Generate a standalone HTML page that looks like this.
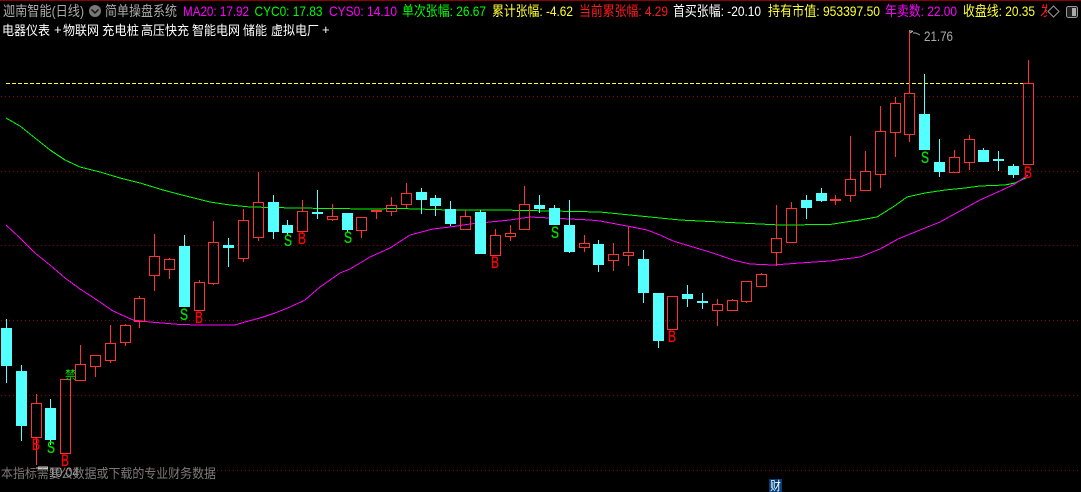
<!DOCTYPE html>
<html><head><meta charset="utf-8"><style>
html,body{margin:0;padding:0;background:#000;width:1081px;height:492px;overflow:hidden}
svg{display:block;position:absolute;left:0;top:0}
text{font-family:"Liberation Sans","Noto Sans CJK SC",sans-serif}
.h text{font-size:14px}
.l text{stroke-width:.35px}
</style></head><body>
<svg width="1081" height="492" viewBox="0 0 1081 492">
<rect width="1081" height="492" fill="#000"/>
<rect x="0" y="0" width="1081" height="1" fill="#8a0000"/>
<g shape-rendering="crispEdges">
<g stroke="#8b0000" stroke-width="1" stroke-dasharray="1 3" fill="none">
<path d="M1 96.5H1081M1 171.5H1081M1 245.5H1081M1 320.5H1081M1 395.5H1081M1 470.5H1081"/>
</g>
<path d="M6 83.5H1023" stroke="#ffff33" stroke-dasharray="4 2" fill="none"/>
<polyline fill="none" stroke="#00ff00" points="6,118 20,126 35,138 50,150 65,160 80,167 100,172 120,178 140,183 163,190 182,195 210,202 230,205 250,207 295,208 330,208.5 370,209 400,208.5 450,210 500,210 550,211 600,212 620,214 640,216 680,220 740,223 780,225 830,224.5 846,222 860,220 877,217 893,207 907,197 925,193 945,190 965,188 980,186 1005,185 1015,183 1028,177"/>
<polyline fill="none" stroke="#ff00ff" points="6,225 20,238 35,253 50,265 65,278 80,289 97,300 113,311 133,320 150,322 180,324.5 200,325 235,325 245,322 260,318 275,313 290,307 305,300 320,287 340,273 350,269 370,257 390,248 410,235 433,229 450,227 470,224 490,222 510,220 530,217 550,218 590,220 600,221 627,226 647,230 660,235 673,241 693,247 713,253 733,260 750,264 773,265 800,263 830,261 860,257 880,249 898,239 920,230 940,222 960,211 980,200 1000,191 1015,184 1028,175"/>
<path fill="#54ffff" stroke="#54ffff" d="M6.5 319V383M1.5 328.5h10v37h-10zM21.5 365V441M16.5 371.5h10v54h-10zM50.5 399V445M45.5 408.5h10v31h-10zM184.5 235V306M179.5 246.5h10v60h-10zM228.5 238V267M223.5 245.5h10v2h-10zM273.5 195V239M268.5 202.5h10v29h-10zM287.5 220V236M282.5 225.5h10v7h-10zM317.5 190V219M312.5 212.5h10v1h-10zM347.5 213V232M342.5 213.5h10v16h-10zM421.5 188V214M416.5 192.5h10v7h-10zM435.5 195V216M430.5 198.5h10v7h-10zM450.5 201V226M445.5 209.5h10v14h-10zM480.5 210V253M475.5 212.5h10v41h-10zM539.5 195V213M534.5 205.5h10v3h-10zM554.5 205V224M549.5 208.5h10v16h-10zM569.5 200V253M564.5 225.5h10v26h-10zM598.5 240V272M593.5 244.5h10v20h-10zM643.5 250V303M638.5 259.5h10v33h-10zM658.5 293V348M653.5 293.5h10v47h-10zM687.5 285V307M682.5 294.5h10v4h-10zM702.5 293V309M697.5 301.5h10v1h-10zM806.5 195V219M801.5 200.5h10v7h-10zM821.5 188V202M816.5 193.5h10v7h-10zM924.5 74V149M919.5 114.5h10v35h-10zM939.5 139V177M934.5 162.5h10v9h-10zM983.5 148V162M978.5 150.5h10v11h-10zM998.5 151V171M993.5 159.5h10v1h-10zM1013.5 164V178M1008.5 166.5h10v8h-10z"/>
<path fill="none" stroke="#ff3232" d="M36.5 394V403M36.5 437V465M31.5 403.5h10v34h-10zM60.5 379.5h10v74h-10zM80.5 345V364M75.5 364.5h10v16h-10zM95.5 366V377M90.5 355.5h10v11h-10zM110.5 325V343M110.5 360V363M105.5 343.5h10v17h-10zM125.5 324V325M125.5 342V346M120.5 325.5h10v17h-10zM139.5 296V298M139.5 321V328M134.5 298.5h10v23h-10zM154.5 234V256M154.5 275V291M149.5 256.5h10v19h-10zM169.5 258V259M169.5 269V279M164.5 259.5h10v10h-10zM199.5 280V282M194.5 282.5h10v28h-10zM213.5 221V242M213.5 283V285M208.5 242.5h10v41h-10zM243.5 209V220M243.5 258V262M238.5 220.5h10v38h-10zM258.5 172V202M258.5 237V241M253.5 202.5h10v35h-10zM302.5 200V211M302.5 231V233M297.5 211.5h10v20h-10zM332.5 204V216M332.5 219V221M327.5 216.5h10v3h-10zM361.5 230V238M356.5 217.5h10v13h-10zM376.5 212V219M391.5 197V205M391.5 211V216M386.5 205.5h10v6h-10zM406.5 183V193M406.5 204V208M401.5 193.5h10v11h-10zM465.5 210V216M465.5 229V230M460.5 216.5h10v13h-10zM495.5 229V235M490.5 235.5h10v20h-10zM510.5 225V233M510.5 236V241M505.5 233.5h10v3h-10zM524.5 186V204M519.5 204.5h10v25h-10zM584.5 235V243M584.5 247V252M579.5 243.5h10v4h-10zM613.5 243V254M613.5 260V271M608.5 254.5h10v6h-10zM628.5 227V252M628.5 255V266M623.5 252.5h10v3h-10zM667.5 296.5h10v33h-10zM717.5 299V304M717.5 310V326M712.5 304.5h10v6h-10zM732.5 299V300M727.5 300.5h10v10h-10zM746.5 301V303M741.5 281.5h10v20h-10zM761.5 273V274M756.5 274.5h10v12h-10zM776.5 205V238M776.5 252V266M771.5 238.5h10v14h-10zM791.5 202V208M786.5 208.5h10v34h-10zM835.5 195V205M850.5 136V179M850.5 195V202M845.5 179.5h10v16h-10zM865.5 151V171M860.5 171.5h10v19h-10zM880.5 106V131M880.5 174V188M875.5 131.5h10v43h-10zM895.5 97V103M895.5 132V157M890.5 103.5h10v29h-10zM909.5 30V93M909.5 134V142M904.5 93.5h10v41h-10zM954.5 150V157M954.5 172V173M949.5 157.5h10v15h-10zM969.5 135V139M969.5 162V170M964.5 139.5h10v23h-10zM1028.5 60V83M1023.5 83.5h10v81h-10z"/>
<rect x="371" y="210" width="11" height="2" fill="#ff3232"/>
<rect x="830" y="199" width="11" height="2" fill="#ff3232"/>
<path d="M909 31h3M910 33l3-2M913 33h3l4 2" stroke="#aaa" fill="none"/>
<path d="M36 468h12M38 467h10M38 469h10" stroke="#ccc" fill="none"/>
<rect x="769" y="479" width="13" height="13" fill="#003e7a"/>
</g>

<g class="l" font-size="17" fill="#00e000" stroke="#00e000">
<text x="47" y="453" textLength="8" lengthAdjust="spacingAndGlyphs">S</text>
<text x="180" y="320" textLength="8" lengthAdjust="spacingAndGlyphs">S</text>
<text x="284" y="246" textLength="8" lengthAdjust="spacingAndGlyphs">S</text>
<text x="344" y="243" textLength="8" lengthAdjust="spacingAndGlyphs">S</text>
<text x="551" y="238" textLength="8" lengthAdjust="spacingAndGlyphs">S</text>
<text x="921" y="163" textLength="8" lengthAdjust="spacingAndGlyphs">S</text>
</g>
<g class="l" font-size="17" fill="#ff0000" stroke="#ff0000">
<text x="32" y="450" textLength="8" lengthAdjust="spacingAndGlyphs">B</text>
<text x="61" y="466" textLength="8" lengthAdjust="spacingAndGlyphs">B</text>
<text x="195" y="323" textLength="8" lengthAdjust="spacingAndGlyphs">B</text>
<text x="298" y="244" textLength="8" lengthAdjust="spacingAndGlyphs">B</text>
<text x="491" y="268" textLength="8" lengthAdjust="spacingAndGlyphs">B</text>
<text x="668" y="342" textLength="8" lengthAdjust="spacingAndGlyphs">B</text>
<text x="1024" y="178" textLength="8" lengthAdjust="spacingAndGlyphs">B</text>
</g>
<text x="65" y="379" font-size="12" fill="#00e000" textLength="11" lengthAdjust="spacingAndGlyphs">禁</text>
<text x="924" y="41" font-size="14" fill="#aaa" textLength="29" lengthAdjust="spacingAndGlyphs">21.76</text>
<text x="49" y="477" font-size="14" fill="#b0b0b0" textLength="30" lengthAdjust="spacingAndGlyphs">10.04</text>
<text x="1" y="478" font-size="13" fill="#7a7a7a" textLength="215" lengthAdjust="spacingAndGlyphs">本指标需要公数据或下载的专业财务数据</text>
<text x="770" y="490" font-size="12" fill="#fff" textLength="11" lengthAdjust="spacingAndGlyphs">财</text>

<g class="h">
<text x="3" y="16" fill="#aaa" textLength="81" lengthAdjust="spacingAndGlyphs">迦南智能(日线)</text>
<circle cx="95" cy="11" r="6" fill="#777"/>
<path d="M91.5 9.5L95 13l3.5-3.5" stroke="#111" stroke-width="1.4" fill="none"/>
<text x="105" y="16" fill="#aaa" textLength="72" lengthAdjust="spacingAndGlyphs">简单操盘系统</text>
<text x="183" y="16" fill="#ff00ff" textLength="66" lengthAdjust="spacingAndGlyphs">MA20: 17.92</text>
<text x="254.500" y="16" fill="#00ff00" textLength="68" lengthAdjust="spacingAndGlyphs">CYC0: 17.83</text>
<text x="329" y="16" fill="#ff00ff" textLength="68" lengthAdjust="spacingAndGlyphs">CYS0: 14.10</text>
<text x="402" y="16" fill="#00ff00" textLength="84" lengthAdjust="spacingAndGlyphs">单次张幅: 26.67</text>
<text x="492" y="16" fill="#ffff33" textLength="81" lengthAdjust="spacingAndGlyphs">累计张幅: -4.62</text>
<text x="579" y="16" fill="#ff1a1a" textLength="89" lengthAdjust="spacingAndGlyphs">当前累张幅: 4.29</text>
<text x="673" y="16" fill="#ffffff" textLength="88" lengthAdjust="spacingAndGlyphs">首买张幅: -20.10</text>
<text x="768" y="16" fill="#ffff33" textLength="112" lengthAdjust="spacingAndGlyphs">持有市值: 953397.50</text>
<text x="885" y="16" fill="#ff00ff" textLength="72" lengthAdjust="spacingAndGlyphs">年卖数: 22.00</text>
<text x="963" y="16" fill="#ffff33" textLength="72" lengthAdjust="spacingAndGlyphs">收盘线: 20.35</text>
<svg x="1040" y="3" width="7" height="16" viewBox="0 0 7 16"><text x="0" y="13" fill="#ff1a1a" font-size="13">发</text></svg>
<path d="M1053.500 6l5.500 5.500-5.500 5.500-5.500-5.500z" fill="none" stroke="#999"/>
<rect x="1066.500" y="6.500" width="11" height="11" rx="2" fill="#222" stroke="#999"/>
<rect x="1072" y="8" width="4" height="8" fill="#aaa"/>
</g>
<g font-size="13" fill="#fff">
<text x="2" y="35" textLength="48" lengthAdjust="spacingAndGlyphs">电器仪表</text>
<text x="54" y="34">+</text>
<text x="63" y="35" textLength="36" lengthAdjust="spacingAndGlyphs">物联网</text>
<text x="102" y="35" textLength="37" lengthAdjust="spacingAndGlyphs">充电桩</text>
<text x="141" y="35" textLength="48" lengthAdjust="spacingAndGlyphs">高压快充</text>
<text x="192" y="35" textLength="48" lengthAdjust="spacingAndGlyphs">智能电网</text>
<text x="243" y="35" textLength="24" lengthAdjust="spacingAndGlyphs">储能</text>
<text x="271" y="35" textLength="48" lengthAdjust="spacingAndGlyphs">虚拟电厂</text>
<text x="322" y="34">+</text>
</g>
</svg>
</body></html>
